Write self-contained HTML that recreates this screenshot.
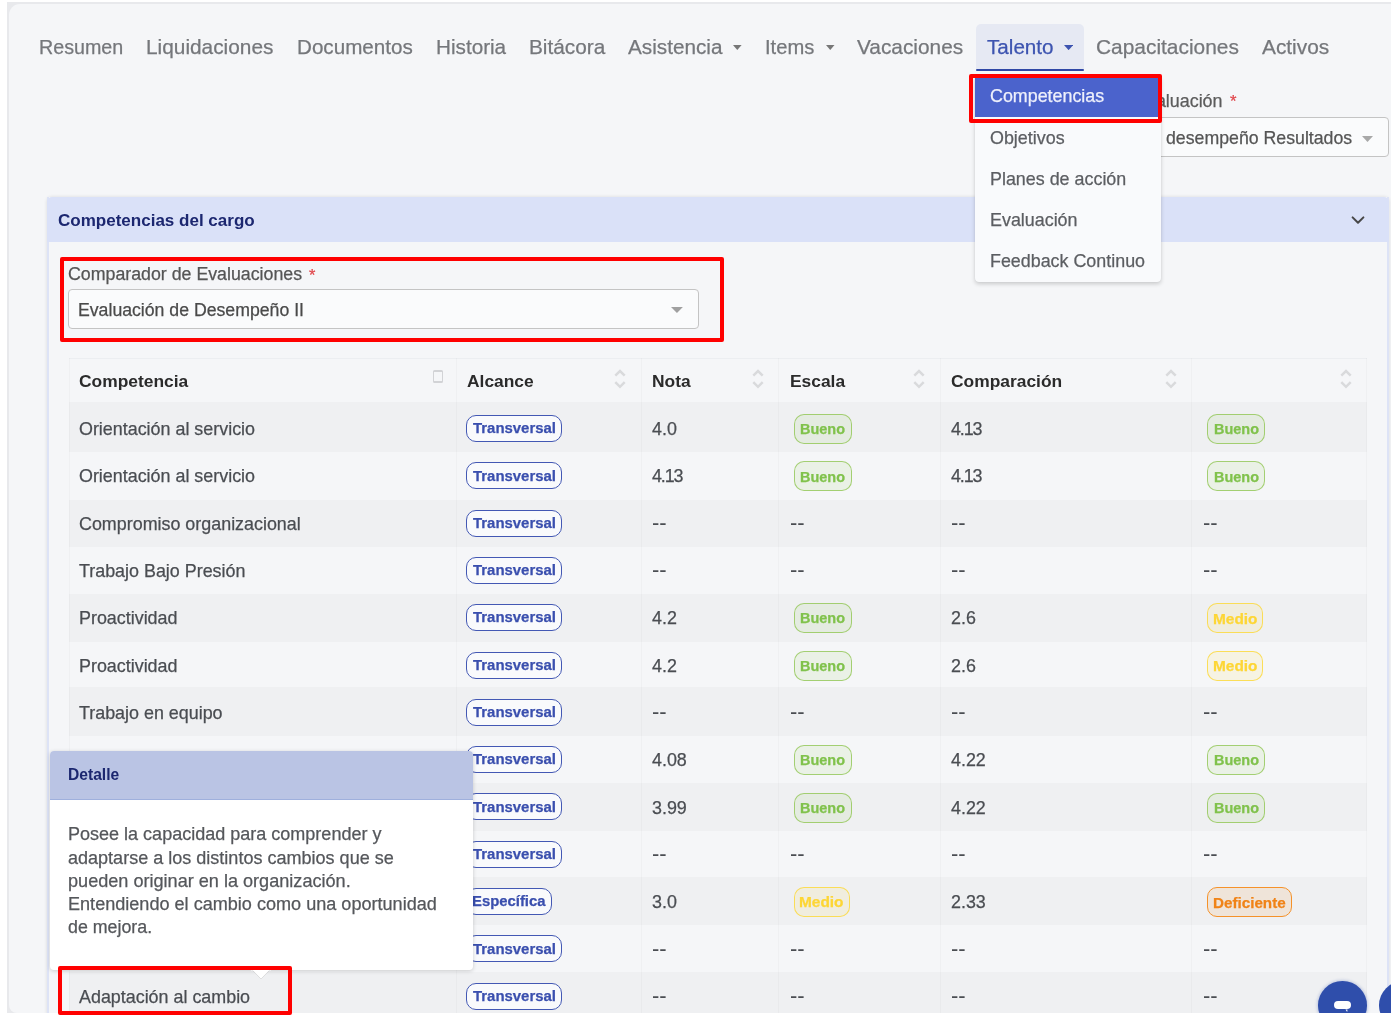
<!DOCTYPE html><html><head><meta charset="utf-8"><style>
html,body{margin:0;padding:0;background:#fff;width:1396px;height:1016px;overflow:hidden;position:relative;}
.t{position:absolute;white-space:nowrap;font-family:"Liberation Sans",sans-serif;will-change:transform;-webkit-text-stroke:0.25px currentColor;}
.b{position:absolute;}
</style></head><body>
<div class="b" style="left:7.00px;top:2.00px;width:1384.00px;height:1010.80px;background:#e8e9ec;"></div>
<div class="b" style="left:8.60px;top:4.10px;width:1382.40px;height:1008.70px;background:#f5f6f8;border-radius:11px 0 0 8px;"></div>
<div class="b" style="left:975.70px;top:23.90px;width:108.30px;height:46.90px;background:#e6e9f3;border-radius:5px 5px 0 0;"></div>
<div class="b" style="left:975.70px;top:68.80px;width:108.30px;height:2.00px;background:#2f47a6;border-radius:1px;"></div>
<div class="t" style="left:38.60px;top:37.63px;font-size:19.70px;line-height:19.70px;color:#75777b;">Resumen</div>
<div class="t" style="left:146.40px;top:36.67px;font-size:20.83px;line-height:20.83px;color:#75777b;">Liquidaciones</div>
<div class="t" style="left:296.90px;top:36.84px;font-size:20.63px;line-height:20.63px;color:#75777b;">Documentos</div>
<div class="t" style="left:436.30px;top:36.78px;font-size:20.70px;line-height:20.70px;color:#75777b;">Historia</div>
<div class="t" style="left:529.00px;top:36.70px;font-size:20.80px;line-height:20.80px;color:#75777b;">Bitácora</div>
<div class="t" style="left:628.00px;top:36.75px;font-size:20.73px;line-height:20.73px;color:#75777b;">Asistencia</div>
<div class="t" style="left:765.20px;top:37.23px;font-size:20.16px;line-height:20.16px;color:#75777b;">Items</div>
<div class="t" style="left:857.20px;top:36.66px;font-size:20.84px;line-height:20.84px;color:#75777b;">Vacaciones</div>
<div class="t" style="left:1095.70px;top:36.61px;font-size:20.90px;line-height:20.90px;color:#75777b;">Capacitaciones</div>
<div class="t" style="left:1261.70px;top:36.65px;font-size:20.85px;line-height:20.85px;color:#75777b;">Activos</div>
<div class="t" style="left:987.00px;top:36.82px;font-size:20.65px;line-height:20.65px;color:#3d54b0;">Talento</div>
<svg class="b" style="left:733.40px;top:44.70px" width="8.60" height="5.00" viewBox="0 0 8.60 5.00"><path d="M0 0H8.60L4.30 5.00Z" fill="#777"/></svg>
<svg class="b" style="left:826.00px;top:44.70px" width="8.50" height="5.00" viewBox="0 0 8.50 5.00"><path d="M0 0H8.50L4.25 5.00Z" fill="#777"/></svg>
<svg class="b" style="left:1064.00px;top:44.60px" width="9.20" height="5.20" viewBox="0 0 9.20 5.20"><path d="M0 0H9.20L4.60 5.20Z" fill="#3d54b0"/></svg>
<div class="t" style="left:1135.03px;top:93.35px;font-size:17.90px;line-height:17.90px;color:#5c5c5c;">Evaluación</div>
<div class="t" style="left:1229.90px;top:94.36px;font-size:16.71px;line-height:16.71px;color:#e0474c;">*</div>
<div class="b" style="left:1080.00px;top:117.40px;width:308.60px;height:40.10px;background:#fafbfc;border:1px solid #c4c4c4;border-radius:4px;box-sizing:border-box;"></div>
<div class="t" style="left:1166.30px;top:129.99px;font-size:17.73px;line-height:17.73px;color:#555;">desempeño Resultados</div>
<svg class="b" style="left:1361.80px;top:135.60px" width="11.00" height="6.00" viewBox="0 0 11.00 6.00"><path d="M0 0H11.00L5.50 6.00Z" fill="#a8a8a8"/></svg>
<div class="b" style="left:46.90px;top:197.20px;width:1341.80px;height:815.60px;box-shadow:0 0 3px 1px rgba(0,0,0,0.07);border-radius:5px 5px 0 0;"></div>
<div class="b" style="left:46.90px;top:197.20px;width:1341.80px;height:815.60px;background:#f5f6f8;border-left:2px solid #dde3f6;border-right:2px solid #dde3f6;box-sizing:border-box;"></div>
<div class="b" style="left:46.90px;top:197.20px;width:1341.80px;height:44.40px;background:#dae1f8;border-radius:5px 5px 0 0;"></div>
<div class="t" style="left:58.00px;top:212.48px;font-size:17.03px;line-height:17.03px;color:#1c2770;font-weight:bold;-webkit-text-stroke:0;">Competencias del cargo</div>
<svg class="b" style="left:1350px;top:215px" width="16" height="11" viewBox="0 0 16 11"><path d="M2.6 2.4L8 7.8L13.4 2.4" fill="none" stroke="#474747" stroke-width="2" stroke-linecap="round" stroke-linejoin="round"/></svg>
<div class="t" style="left:67.90px;top:265.76px;font-size:17.77px;line-height:17.77px;color:#555;">Comparador de Evaluaciones</div>
<div class="t" style="left:308.60px;top:266.87px;font-size:16.45px;line-height:16.45px;color:#e0474c;">*</div>
<div class="b" style="left:68.30px;top:289.30px;width:630.30px;height:40.20px;background:#fafbfc;border:1px solid #c4c4c4;border-radius:4px;box-sizing:border-box;"></div>
<div class="t" style="left:78.20px;top:301.93px;font-size:17.68px;line-height:17.68px;color:#4a4a4a;">Evaluación de Desempeño II</div>
<svg class="b" style="left:671.30px;top:307.20px" width="11.90" height="6.00" viewBox="0 0 11.90 6.00"><path d="M0 0H11.90L5.95 6.00Z" fill="#a0a0a0"/></svg>
<div class="b" style="left:68.60px;top:358.30px;width:1298.50px;height:43.70px;background:#f5f6f8;border-top:1px solid #eceef1;box-sizing:border-box;"></div>
<div class="b" style="left:68.60px;top:402.00px;width:1298.50px;height:50.30px;background:#eff0f2;"></div>
<div class="b" style="left:68.60px;top:452.30px;width:1298.50px;height:47.30px;background:#f5f6f8;"></div>
<div class="b" style="left:68.60px;top:499.60px;width:1298.50px;height:47.30px;background:#eff0f2;"></div>
<div class="b" style="left:68.60px;top:546.90px;width:1298.50px;height:47.10px;background:#f5f6f8;"></div>
<div class="b" style="left:68.60px;top:594.00px;width:1298.50px;height:47.70px;background:#eff0f2;"></div>
<div class="b" style="left:68.60px;top:641.70px;width:1298.50px;height:45.60px;background:#f5f6f8;"></div>
<div class="b" style="left:68.60px;top:687.30px;width:1298.50px;height:48.90px;background:#eff0f2;"></div>
<div class="b" style="left:68.60px;top:736.20px;width:1298.50px;height:46.30px;background:#f5f6f8;"></div>
<div class="b" style="left:68.60px;top:782.50px;width:1298.50px;height:48.60px;background:#eff0f2;"></div>
<div class="b" style="left:68.60px;top:831.10px;width:1298.50px;height:46.30px;background:#f5f6f8;"></div>
<div class="b" style="left:68.60px;top:877.40px;width:1298.50px;height:48.00px;background:#eff0f2;"></div>
<div class="b" style="left:68.60px;top:925.40px;width:1298.50px;height:46.30px;background:#f5f6f8;"></div>
<div class="b" style="left:68.60px;top:971.70px;width:1298.50px;height:47.30px;background:#eff0f2;"></div>
<div class="b" style="left:68.60px;top:358.30px;width:1.00px;height:654.70px;background:rgba(0,0,0,0.025);"></div>
<div class="b" style="left:455.80px;top:358.30px;width:1.00px;height:654.70px;background:rgba(0,0,0,0.025);"></div>
<div class="b" style="left:641.20px;top:358.30px;width:1.00px;height:654.70px;background:rgba(0,0,0,0.025);"></div>
<div class="b" style="left:778.20px;top:358.30px;width:1.00px;height:654.70px;background:rgba(0,0,0,0.025);"></div>
<div class="b" style="left:939.80px;top:358.30px;width:1.00px;height:654.70px;background:rgba(0,0,0,0.025);"></div>
<div class="b" style="left:1191.30px;top:358.30px;width:1.00px;height:654.70px;background:rgba(0,0,0,0.025);"></div>
<div class="b" style="left:1366.10px;top:358.30px;width:1.00px;height:654.70px;background:rgba(0,0,0,0.025);"></div>
<div class="t" style="left:78.60px;top:373.37px;font-size:17.40px;line-height:17.40px;color:#2b2b2b;font-weight:bold;-webkit-text-stroke:0;">Competencia</div>
<div class="t" style="left:467.30px;top:373.37px;font-size:17.40px;line-height:17.40px;color:#2b2b2b;font-weight:bold;-webkit-text-stroke:0;">Alcance</div>
<div class="t" style="left:651.50px;top:373.37px;font-size:17.40px;line-height:17.40px;color:#2b2b2b;font-weight:bold;-webkit-text-stroke:0;">Nota</div>
<div class="t" style="left:789.60px;top:373.37px;font-size:17.40px;line-height:17.40px;color:#2b2b2b;font-weight:bold;-webkit-text-stroke:0;">Escala</div>
<div class="t" style="left:950.80px;top:373.37px;font-size:17.40px;line-height:17.40px;color:#2b2b2b;font-weight:bold;-webkit-text-stroke:0;">Comparación</div>
<svg class="b" style="left:613.50px;top:367px" width="12" height="22" viewBox="0 0 12 22"><path d="M1.3 8.6L6 4L10.7 8.6M1.3 15.2L6 19.8L10.7 15.2" fill="none" stroke="#d9dadc" stroke-width="2.5"/></svg>
<svg class="b" style="left:752.00px;top:367px" width="12" height="22" viewBox="0 0 12 22"><path d="M1.3 8.6L6 4L10.7 8.6M1.3 15.2L6 19.8L10.7 15.2" fill="none" stroke="#d9dadc" stroke-width="2.5"/></svg>
<svg class="b" style="left:913.00px;top:367px" width="12" height="22" viewBox="0 0 12 22"><path d="M1.3 8.6L6 4L10.7 8.6M1.3 15.2L6 19.8L10.7 15.2" fill="none" stroke="#d9dadc" stroke-width="2.5"/></svg>
<svg class="b" style="left:1164.50px;top:367px" width="12" height="22" viewBox="0 0 12 22"><path d="M1.3 8.6L6 4L10.7 8.6M1.3 15.2L6 19.8L10.7 15.2" fill="none" stroke="#d9dadc" stroke-width="2.5"/></svg>
<svg class="b" style="left:1340.30px;top:367px" width="12" height="22" viewBox="0 0 12 22"><path d="M1.3 8.6L6 4L10.7 8.6M1.3 15.2L6 19.8L10.7 15.2" fill="none" stroke="#d9dadc" stroke-width="2.5"/></svg>
<div class="b" style="left:433.40px;top:370.20px;width:9.80px;height:12.80px;border:1.5px solid #d2d3d6;border-top-width:2px;border-bottom-width:2px;border-radius:1.5px;box-sizing:border-box;"></div>
<div class="t" style="left:78.60px;top:421.10px;font-size:17.90px;line-height:17.90px;color:#4a4d52;">Orientación al servicio</div>
<div class="b" style="left:466.20px;top:415.05px;width:96.00px;height:27.00px;border:1.5px solid #4358b4;background:#f9fafc;border-radius:10px;box-sizing:border-box;"></div>
<div class="t" style="left:472.70px;top:421.21px;font-size:14.93px;line-height:14.93px;color:#3a4fae;font-weight:bold;">Transversal</div>
<div class="t" style="left:651.50px;top:421.10px;font-size:17.90px;line-height:17.90px;color:#4a4d52;">4.0</div>
<div class="b" style="left:793.60px;top:414.15px;width:58.00px;height:30.00px;border:1.8px solid rgba(139,195,74,0.75);background:rgba(139,195,74,0.10);border-radius:10px;box-sizing:border-box;"></div>
<div class="t" style="left:800.10px;top:422.21px;font-size:14.46px;line-height:14.46px;color:#80c24c;font-weight:bold;">Bueno</div>
<div class="t" style="left:950.80px;top:421.10px;font-size:17.90px;line-height:17.90px;color:#4a4d52;letter-spacing:-1.1px;">4.13</div>
<div class="b" style="left:1207.20px;top:414.15px;width:58.00px;height:30.00px;border:1.8px solid rgba(139,195,74,0.75);background:rgba(139,195,74,0.10);border-radius:10px;box-sizing:border-box;"></div>
<div class="t" style="left:1213.70px;top:422.21px;font-size:14.46px;line-height:14.46px;color:#80c24c;font-weight:bold;">Bueno</div>
<div class="t" style="left:78.60px;top:468.40px;font-size:17.90px;line-height:17.90px;color:#4a4d52;">Orientación al servicio</div>
<div class="b" style="left:466.20px;top:462.35px;width:96.00px;height:27.00px;border:1.5px solid #4358b4;background:#f9fafc;border-radius:10px;box-sizing:border-box;"></div>
<div class="t" style="left:472.70px;top:468.51px;font-size:14.93px;line-height:14.93px;color:#3a4fae;font-weight:bold;">Transversal</div>
<div class="t" style="left:651.50px;top:468.40px;font-size:17.90px;line-height:17.90px;color:#4a4d52;letter-spacing:-1.1px;">4.13</div>
<div class="b" style="left:793.60px;top:461.45px;width:58.00px;height:30.00px;border:1.8px solid rgba(139,195,74,0.75);background:rgba(139,195,74,0.10);border-radius:10px;box-sizing:border-box;"></div>
<div class="t" style="left:800.10px;top:469.51px;font-size:14.46px;line-height:14.46px;color:#80c24c;font-weight:bold;">Bueno</div>
<div class="t" style="left:950.80px;top:468.40px;font-size:17.90px;line-height:17.90px;color:#4a4d52;letter-spacing:-1.1px;">4.13</div>
<div class="b" style="left:1207.20px;top:461.45px;width:58.00px;height:30.00px;border:1.8px solid rgba(139,195,74,0.75);background:rgba(139,195,74,0.10);border-radius:10px;box-sizing:border-box;"></div>
<div class="t" style="left:1213.70px;top:469.51px;font-size:14.46px;line-height:14.46px;color:#80c24c;font-weight:bold;">Bueno</div>
<div class="t" style="left:78.60px;top:515.70px;font-size:17.90px;line-height:17.90px;color:#4a4d52;">Compromiso organizacional</div>
<div class="b" style="left:466.20px;top:509.65px;width:96.00px;height:27.00px;border:1.5px solid #4358b4;background:#f9fafc;border-radius:10px;box-sizing:border-box;"></div>
<div class="t" style="left:472.70px;top:515.81px;font-size:14.93px;line-height:14.93px;color:#3a4fae;font-weight:bold;">Transversal</div>
<div class="t" style="left:651.50px;top:512.17px;font-size:22.07px;line-height:22.07px;color:#4a4d52;-webkit-text-stroke:0;">--</div>
<div class="t" style="left:789.60px;top:512.17px;font-size:22.07px;line-height:22.07px;color:#4a4d52;-webkit-text-stroke:0;">--</div>
<div class="t" style="left:950.80px;top:512.17px;font-size:22.07px;line-height:22.07px;color:#4a4d52;-webkit-text-stroke:0;">--</div>
<div class="t" style="left:1202.90px;top:512.17px;font-size:22.07px;line-height:22.07px;color:#4a4d52;-webkit-text-stroke:0;">--</div>
<div class="t" style="left:78.60px;top:563.00px;font-size:17.90px;line-height:17.90px;color:#4a4d52;">Trabajo Bajo Presión</div>
<div class="b" style="left:466.20px;top:556.95px;width:96.00px;height:27.00px;border:1.5px solid #4358b4;background:#f9fafc;border-radius:10px;box-sizing:border-box;"></div>
<div class="t" style="left:472.70px;top:563.11px;font-size:14.93px;line-height:14.93px;color:#3a4fae;font-weight:bold;">Transversal</div>
<div class="t" style="left:651.50px;top:559.47px;font-size:22.07px;line-height:22.07px;color:#4a4d52;-webkit-text-stroke:0;">--</div>
<div class="t" style="left:789.60px;top:559.47px;font-size:22.07px;line-height:22.07px;color:#4a4d52;-webkit-text-stroke:0;">--</div>
<div class="t" style="left:950.80px;top:559.47px;font-size:22.07px;line-height:22.07px;color:#4a4d52;-webkit-text-stroke:0;">--</div>
<div class="t" style="left:1202.90px;top:559.47px;font-size:22.07px;line-height:22.07px;color:#4a4d52;-webkit-text-stroke:0;">--</div>
<div class="t" style="left:78.60px;top:610.30px;font-size:17.90px;line-height:17.90px;color:#4a4d52;">Proactividad</div>
<div class="b" style="left:466.20px;top:604.25px;width:96.00px;height:27.00px;border:1.5px solid #4358b4;background:#f9fafc;border-radius:10px;box-sizing:border-box;"></div>
<div class="t" style="left:472.70px;top:610.41px;font-size:14.93px;line-height:14.93px;color:#3a4fae;font-weight:bold;">Transversal</div>
<div class="t" style="left:651.50px;top:610.30px;font-size:17.90px;line-height:17.90px;color:#4a4d52;">4.2</div>
<div class="b" style="left:793.60px;top:603.35px;width:58.00px;height:30.00px;border:1.8px solid rgba(139,195,74,0.75);background:rgba(139,195,74,0.10);border-radius:10px;box-sizing:border-box;"></div>
<div class="t" style="left:800.10px;top:611.41px;font-size:14.46px;line-height:14.46px;color:#80c24c;font-weight:bold;">Bueno</div>
<div class="t" style="left:950.80px;top:610.30px;font-size:17.90px;line-height:17.90px;color:#4a4d52;">2.6</div>
<div class="b" style="left:1207.20px;top:603.35px;width:56.00px;height:30.00px;border:1.8px solid rgba(253,216,53,0.8);background:rgba(253,216,53,0.10);border-radius:10px;box-sizing:border-box;"></div>
<div class="t" style="left:1212.95px;top:610.61px;font-size:15.40px;line-height:15.40px;color:#fdd635;font-weight:bold;">Medio</div>
<div class="t" style="left:78.60px;top:657.60px;font-size:17.90px;line-height:17.90px;color:#4a4d52;">Proactividad</div>
<div class="b" style="left:466.20px;top:651.55px;width:96.00px;height:27.00px;border:1.5px solid #4358b4;background:#f9fafc;border-radius:10px;box-sizing:border-box;"></div>
<div class="t" style="left:472.70px;top:657.71px;font-size:14.93px;line-height:14.93px;color:#3a4fae;font-weight:bold;">Transversal</div>
<div class="t" style="left:651.50px;top:657.60px;font-size:17.90px;line-height:17.90px;color:#4a4d52;">4.2</div>
<div class="b" style="left:793.60px;top:650.65px;width:58.00px;height:30.00px;border:1.8px solid rgba(139,195,74,0.75);background:rgba(139,195,74,0.10);border-radius:10px;box-sizing:border-box;"></div>
<div class="t" style="left:800.10px;top:658.71px;font-size:14.46px;line-height:14.46px;color:#80c24c;font-weight:bold;">Bueno</div>
<div class="t" style="left:950.80px;top:657.60px;font-size:17.90px;line-height:17.90px;color:#4a4d52;">2.6</div>
<div class="b" style="left:1207.20px;top:650.65px;width:56.00px;height:30.00px;border:1.8px solid rgba(253,216,53,0.8);background:rgba(253,216,53,0.10);border-radius:10px;box-sizing:border-box;"></div>
<div class="t" style="left:1212.95px;top:657.91px;font-size:15.40px;line-height:15.40px;color:#fdd635;font-weight:bold;">Medio</div>
<div class="t" style="left:78.60px;top:704.90px;font-size:17.90px;line-height:17.90px;color:#4a4d52;">Trabajo en equipo</div>
<div class="b" style="left:466.20px;top:698.85px;width:96.00px;height:27.00px;border:1.5px solid #4358b4;background:#f9fafc;border-radius:10px;box-sizing:border-box;"></div>
<div class="t" style="left:472.70px;top:705.01px;font-size:14.93px;line-height:14.93px;color:#3a4fae;font-weight:bold;">Transversal</div>
<div class="t" style="left:651.50px;top:701.37px;font-size:22.07px;line-height:22.07px;color:#4a4d52;-webkit-text-stroke:0;">--</div>
<div class="t" style="left:789.60px;top:701.37px;font-size:22.07px;line-height:22.07px;color:#4a4d52;-webkit-text-stroke:0;">--</div>
<div class="t" style="left:950.80px;top:701.37px;font-size:22.07px;line-height:22.07px;color:#4a4d52;-webkit-text-stroke:0;">--</div>
<div class="t" style="left:1202.90px;top:701.37px;font-size:22.07px;line-height:22.07px;color:#4a4d52;-webkit-text-stroke:0;">--</div>
<div class="b" style="left:466.20px;top:746.15px;width:96.00px;height:27.00px;border:1.5px solid #4358b4;background:#f9fafc;border-radius:10px;box-sizing:border-box;"></div>
<div class="t" style="left:472.70px;top:752.31px;font-size:14.93px;line-height:14.93px;color:#3a4fae;font-weight:bold;">Transversal</div>
<div class="t" style="left:651.50px;top:752.20px;font-size:17.90px;line-height:17.90px;color:#4a4d52;">4.08</div>
<div class="b" style="left:793.60px;top:745.25px;width:58.00px;height:30.00px;border:1.8px solid rgba(139,195,74,0.75);background:rgba(139,195,74,0.10);border-radius:10px;box-sizing:border-box;"></div>
<div class="t" style="left:800.10px;top:753.31px;font-size:14.46px;line-height:14.46px;color:#80c24c;font-weight:bold;">Bueno</div>
<div class="t" style="left:950.80px;top:752.20px;font-size:17.90px;line-height:17.90px;color:#4a4d52;">4.22</div>
<div class="b" style="left:1207.20px;top:745.25px;width:58.00px;height:30.00px;border:1.8px solid rgba(139,195,74,0.75);background:rgba(139,195,74,0.10);border-radius:10px;box-sizing:border-box;"></div>
<div class="t" style="left:1213.70px;top:753.31px;font-size:14.46px;line-height:14.46px;color:#80c24c;font-weight:bold;">Bueno</div>
<div class="b" style="left:466.20px;top:793.45px;width:96.00px;height:27.00px;border:1.5px solid #4358b4;background:#f9fafc;border-radius:10px;box-sizing:border-box;"></div>
<div class="t" style="left:472.70px;top:799.61px;font-size:14.93px;line-height:14.93px;color:#3a4fae;font-weight:bold;">Transversal</div>
<div class="t" style="left:651.50px;top:799.50px;font-size:17.90px;line-height:17.90px;color:#4a4d52;">3.99</div>
<div class="b" style="left:793.60px;top:792.55px;width:58.00px;height:30.00px;border:1.8px solid rgba(139,195,74,0.75);background:rgba(139,195,74,0.10);border-radius:10px;box-sizing:border-box;"></div>
<div class="t" style="left:800.10px;top:800.61px;font-size:14.46px;line-height:14.46px;color:#80c24c;font-weight:bold;">Bueno</div>
<div class="t" style="left:950.80px;top:799.50px;font-size:17.90px;line-height:17.90px;color:#4a4d52;">4.22</div>
<div class="b" style="left:1207.20px;top:792.55px;width:58.00px;height:30.00px;border:1.8px solid rgba(139,195,74,0.75);background:rgba(139,195,74,0.10);border-radius:10px;box-sizing:border-box;"></div>
<div class="t" style="left:1213.70px;top:800.61px;font-size:14.46px;line-height:14.46px;color:#80c24c;font-weight:bold;">Bueno</div>
<div class="b" style="left:466.20px;top:840.75px;width:96.00px;height:27.00px;border:1.5px solid #4358b4;background:#f9fafc;border-radius:10px;box-sizing:border-box;"></div>
<div class="t" style="left:472.70px;top:846.91px;font-size:14.93px;line-height:14.93px;color:#3a4fae;font-weight:bold;">Transversal</div>
<div class="t" style="left:651.50px;top:843.27px;font-size:22.07px;line-height:22.07px;color:#4a4d52;-webkit-text-stroke:0;">--</div>
<div class="t" style="left:789.60px;top:843.27px;font-size:22.07px;line-height:22.07px;color:#4a4d52;-webkit-text-stroke:0;">--</div>
<div class="t" style="left:950.80px;top:843.27px;font-size:22.07px;line-height:22.07px;color:#4a4d52;-webkit-text-stroke:0;">--</div>
<div class="t" style="left:1202.90px;top:843.27px;font-size:22.07px;line-height:22.07px;color:#4a4d52;-webkit-text-stroke:0;">--</div>
<div class="b" style="left:466.20px;top:888.05px;width:86.00px;height:27.00px;border:1.5px solid #4358b4;background:#f9fafc;border-radius:10px;box-sizing:border-box;"></div>
<div class="t" style="left:472.40px;top:894.27px;font-size:14.86px;line-height:14.86px;color:#3a4fae;font-weight:bold;">Específica</div>
<div class="t" style="left:651.50px;top:894.10px;font-size:17.90px;line-height:17.90px;color:#4a4d52;">3.0</div>
<div class="b" style="left:793.60px;top:887.15px;width:56.00px;height:30.00px;border:1.8px solid rgba(253,216,53,0.8);background:rgba(253,216,53,0.10);border-radius:10px;box-sizing:border-box;"></div>
<div class="t" style="left:799.35px;top:894.41px;font-size:15.40px;line-height:15.40px;color:#fdd635;font-weight:bold;">Medio</div>
<div class="t" style="left:950.80px;top:894.10px;font-size:17.90px;line-height:17.90px;color:#4a4d52;">2.33</div>
<div class="b" style="left:1207.20px;top:887.15px;width:85.00px;height:30.00px;border:1.8px solid #f5922a;background:rgba(245,124,0,0.10);border-radius:10px;box-sizing:border-box;"></div>
<div class="t" style="left:1213.35px;top:894.57px;font-size:15.21px;line-height:15.21px;color:#f08317;font-weight:bold;">Deficiente</div>
<div class="b" style="left:466.20px;top:935.35px;width:96.00px;height:27.00px;border:1.5px solid #4358b4;background:#f9fafc;border-radius:10px;box-sizing:border-box;"></div>
<div class="t" style="left:472.70px;top:941.51px;font-size:14.93px;line-height:14.93px;color:#3a4fae;font-weight:bold;">Transversal</div>
<div class="t" style="left:651.50px;top:937.87px;font-size:22.07px;line-height:22.07px;color:#4a4d52;-webkit-text-stroke:0;">--</div>
<div class="t" style="left:789.60px;top:937.87px;font-size:22.07px;line-height:22.07px;color:#4a4d52;-webkit-text-stroke:0;">--</div>
<div class="t" style="left:950.80px;top:937.87px;font-size:22.07px;line-height:22.07px;color:#4a4d52;-webkit-text-stroke:0;">--</div>
<div class="t" style="left:1202.90px;top:937.87px;font-size:22.07px;line-height:22.07px;color:#4a4d52;-webkit-text-stroke:0;">--</div>
<div class="t" style="left:78.60px;top:988.70px;font-size:17.90px;line-height:17.90px;color:#4a4d52;">Adaptación al cambio</div>
<div class="b" style="left:466.20px;top:982.65px;width:96.00px;height:27.00px;border:1.5px solid #4358b4;background:#f9fafc;border-radius:10px;box-sizing:border-box;"></div>
<div class="t" style="left:472.70px;top:988.81px;font-size:14.93px;line-height:14.93px;color:#3a4fae;font-weight:bold;">Transversal</div>
<div class="t" style="left:651.50px;top:985.17px;font-size:22.07px;line-height:22.07px;color:#4a4d52;-webkit-text-stroke:0;">--</div>
<div class="t" style="left:789.60px;top:985.17px;font-size:22.07px;line-height:22.07px;color:#4a4d52;-webkit-text-stroke:0;">--</div>
<div class="t" style="left:950.80px;top:985.17px;font-size:22.07px;line-height:22.07px;color:#4a4d52;-webkit-text-stroke:0;">--</div>
<div class="t" style="left:1202.90px;top:985.17px;font-size:22.07px;line-height:22.07px;color:#4a4d52;-webkit-text-stroke:0;">--</div>
<div class="b" style="left:1318.3px;top:981.2px;width:48.7px;height:48.7px;border-radius:50%;background:#2f4eab;box-shadow:0 0 3px 1px rgba(47,78,171,0.25);"></div>
<div class="b" style="left:1334.00px;top:1000.60px;width:16.70px;height:8.30px;background:#fff;border-radius:4.2px;"></div>
<svg class="b" style="left:1344px;top:1008px" width="5" height="5" viewBox="0 0 5 5"><path d="M1.5 1.5L3.5 1.5L3.2 4Z" fill="#fff"/></svg>
<div class="b" style="left:1379px;top:981.15px;width:48.7px;height:48.7px;border-radius:50%;background:#2f4eab;"></div>
<div class="b" style="left:1391.00px;top:0.00px;width:5.00px;height:1016.00px;background:#fff;"></div>
<div class="b" style="left:0.00px;top:1012.80px;width:1396.00px;height:3.20px;background:#fff;"></div>
<div class="b" style="left:975.30px;top:76.00px;width:185.70px;height:205.80px;background:#f9fafc;border-radius:4px;box-shadow:0 2px 4px rgba(0,0,0,0.18),0 0 1px rgba(0,0,0,0.12);"></div>
<div class="b" style="left:975.30px;top:78.20px;width:183.30px;height:38.40px;background:#4b63cc;"></div>
<div class="t" style="left:990.30px;top:88.46px;font-size:17.88px;line-height:17.88px;color:#eef0fb;">Competencias</div>
<div class="t" style="left:990.40px;top:129.95px;font-size:17.90px;line-height:17.90px;color:#5c5e62;">Objetivos</div>
<div class="t" style="left:990.40px;top:171.15px;font-size:17.90px;line-height:17.90px;color:#5c5e62;">Planes de acción</div>
<div class="t" style="left:990.40px;top:211.75px;font-size:17.90px;line-height:17.90px;color:#5c5e62;">Evaluación</div>
<div class="t" style="left:990.40px;top:252.96px;font-size:17.89px;line-height:17.89px;color:#5c5e62;">Feedback Continuo</div>
<div class="b" style="left:50.30px;top:750.50px;width:422.50px;height:219.70px;background:#fff;border-radius:4px;box-shadow:0 1px 4px rgba(0,0,0,0.18);"></div>
<div class="b" style="left:50.30px;top:750.50px;width:422.50px;height:49.70px;background:#bac4e4;border-bottom:1.5px solid #9fb0dd;border-radius:4px 4px 0 0;box-sizing:border-box;"></div>
<div class="t" style="left:68.40px;top:767.29px;font-size:15.60px;line-height:15.60px;color:#1c2770;font-weight:bold;-webkit-text-stroke:0;">Detalle</div>
<div class="t" style="left:67.70px;top:825.24px;font-size:18.02px;line-height:18.02px;color:#55575b;">Posee la capacidad para comprender y</div>
<div class="t" style="left:67.70px;top:848.63px;font-size:18.04px;line-height:18.04px;color:#55575b;">adaptarse a los distintos cambios que se</div>
<div class="t" style="left:67.70px;top:871.98px;font-size:18.10px;line-height:18.10px;color:#55575b;">pueden originar en la organización.</div>
<div class="t" style="left:67.70px;top:895.40px;font-size:18.08px;line-height:18.08px;color:#55575b;">Entendiendo el cambio como una oportunidad</div>
<div class="t" style="left:67.70px;top:919.02px;font-size:17.82px;line-height:17.82px;color:#55575b;">de mejora.</div>
<svg class="b" style="left:251px;top:969px" width="20" height="11" viewBox="0 0 20 11"><path d="M1 0.5L10 10L19 0.5Z" fill="#fff"/><path d="M1 0.8L10 10L19 0.8" fill="none" stroke="rgba(0,0,0,0.10)" stroke-width="1"/><rect x="0" y="0" width="20" height="1.5" fill="#fff"/></svg>
<div class="b" style="left:969.20px;top:74.10px;width:193.10px;height:49.00px;border:4px solid #f00;border-radius:2px;box-sizing:border-box;"></div>
<div class="b" style="left:60.40px;top:257.00px;width:663.30px;height:85.20px;border:4px solid #f00;border-radius:2px;box-sizing:border-box;"></div>
<div class="b" style="left:58.20px;top:965.80px;width:233.70px;height:49.50px;border:4px solid #f00;border-radius:2px;box-sizing:border-box;"></div>
</body></html>
